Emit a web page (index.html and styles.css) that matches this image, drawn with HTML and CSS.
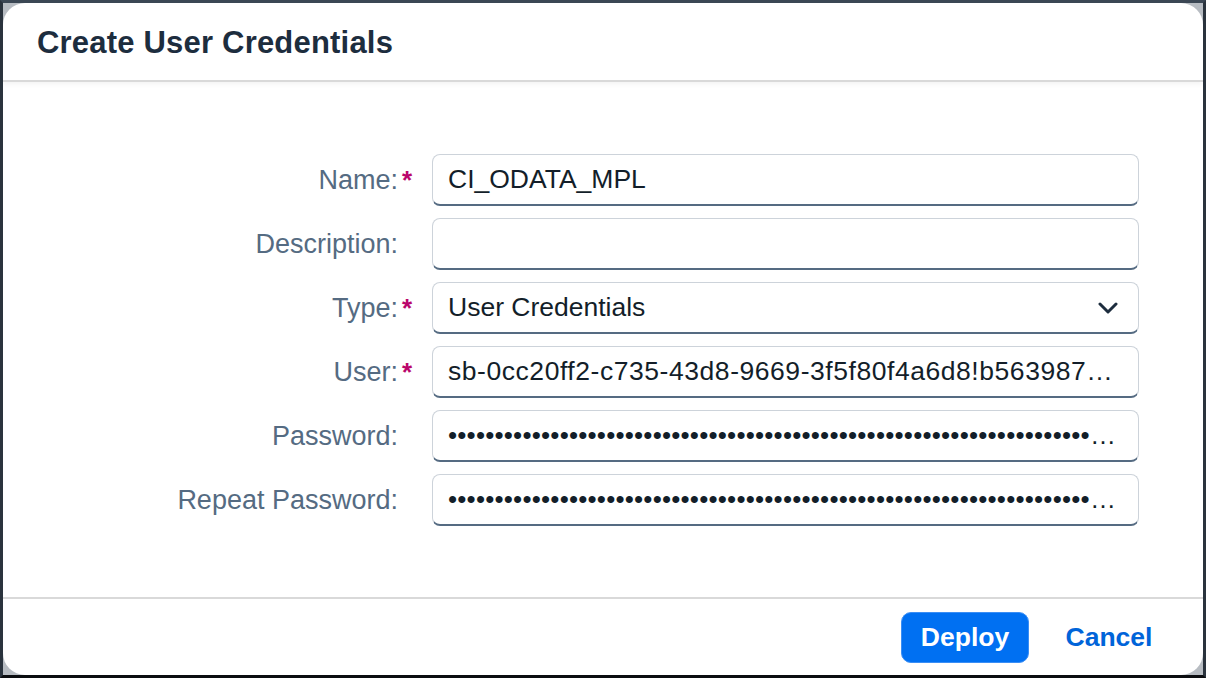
FILE: index.html
```html
<!DOCTYPE html>
<html lang="en">
<head>
<meta charset="utf-8">
<title>Create User Credentials</title>
<link rel="stylesheet" href="styles.css">
</head>
<body>
<div class="frame">
  <div class="dialog">
    <header class="dialog-header">
      <h1 class="dialog-title">Create User Credentials</h1>
    </header>
    <main class="dialog-content">
      <div class="form">
        <label class="label">Name:</label><span class="req">*</span>
        <div class="field"><span class="value">CI_ODATA_MPL</span></div>

        <label class="label">Description:</label><span class="req"></span>
        <div class="field"><span class="value"></span></div>

        <label class="label">Type:</label><span class="req">*</span>
        <div class="field field-select"><span class="value">User Credentials</span>
          <svg class="chevron" width="20" height="12" viewBox="0 0 20 12"><path d="M2 2 L10 10 L18 2" fill="none" stroke="#1d2d3e" stroke-width="3" stroke-linecap="round" stroke-linejoin="round"/></svg>
        </div>

        <label class="label">User:</label><span class="req">*</span>
        <div class="field"><span class="value value-id">sb-0cc20ff2-c735-43d8-9669-3f5f80f4a6d8!b563987|it!b117912</span></div>

        <label class="label">Password:</label><span class="req"></span>
        <div class="field"><span class="value dots">••••••••••••••••••••••••••••••••••••••••••••••••••••••••••••••••••••••••••••••••••••••••••••••••••••••••••••••••••••••••</span></div>

        <label class="label">Repeat Password:</label><span class="req"></span>
        <div class="field"><span class="value dots">••••••••••••••••••••••••••••••••••••••••••••••••••••••••••••••••••••••••••••••••••••••••••••••••••••••••••••••••••••••••</span></div>
      </div>
    </main>
    <footer class="dialog-footer">
      <button class="btn btn-primary">Deploy</button>
      <button class="btn btn-link">Cancel</button>
    </footer>
  </div>
</div>
</body>
</html>
```

FILE: styles.css
```css
* { box-sizing: border-box; }
html, body { margin: 0; padding: 0; }
body {
  width: 1206px;
  height: 678px;
  overflow: hidden;
  font-family: "Liberation Sans", Arial, sans-serif;
  background: #b7bcc2;
}
.frame {
  width: 1206px;
  height: 678px;
  border-top: 3px solid #3b4754;
  border-left: 3px solid #2a333d;
  border-right: 3px solid #2a333d;
  border-bottom: 3px solid #0b0d10;
  background: #b7bcc2;
}
.dialog {
  width: 100%;
  height: 100%;
  background: #ffffff;
  border-radius: 22px;
  display: flex;
  flex-direction: column;
  overflow: hidden;
}
.dialog-header {
  height: 79px;
  flex: none;
  border-bottom: 2px solid #d9d9d9;
  box-shadow: 0 2px 5px rgba(0, 0, 0, 0.05);
  display: flex;
  align-items: center;
  padding-left: 34px;
  padding-top: 3px;
}
.dialog-title {
  margin: 0;
  font-size: 31px;
  font-weight: 700;
  color: #1d2d3e;
  letter-spacing: 0.2px;
}
.dialog-content {
  flex: 1;
  padding-top: 72px;
}
.form {
  display: grid;
  grid-template-columns: 395px 34px 707px;
  grid-auto-rows: 52px;
  row-gap: 12px;
  align-items: center;
}
.label {
  text-align: right;
  font-size: 27px;
  color: #556b82;
  white-space: nowrap;
}
.req {
  align-self: center;
  padding-left: 4px;
  color: #ba066c;
  font-size: 26px;
  font-weight: 700;
}
.field {
  height: 52px;
  border: 1.5px solid #cdd3da;
  border-bottom: 2px solid #556b82;
  border-radius: 8px;
  background: #fff;
  display: flex;
  align-items: center;
  padding: 0 16px 0 15px;
  min-width: 0;
}
.value {
  flex: 1;
  min-width: 0;
  font-size: 26.5px;
  color: #131e29;
  white-space: nowrap;
  overflow: hidden;
  text-overflow: ellipsis;
}
.value-id {
  letter-spacing: 0.55px;
  margin-right: 6px;
}
.dots {
  font-size: 26px;
  letter-spacing: 0.2px;
}
.chevron {
  flex: none;
  margin-left: 8px;
  margin-right: 4px;
}
.dialog-footer {
  height: 78px;
  flex: none;
  border-top: 2px solid #d9d9d9;
  display: flex;
  align-items: center;
  justify-content: flex-end;
  padding-right: 30px;
  gap: 16px;
}
.btn {
  width: 128px;
  height: 51px;
  border-radius: 10px;
  font-family: "Liberation Sans", Arial, sans-serif;
  font-size: 26.5px;
  font-weight: 700;
  cursor: pointer;
}
.btn-primary {
  background: #0070f2;
  border: 1px solid #3a8ef5;
  color: #ffffff;
}
.btn-link {
  background: transparent;
  border: 1px solid transparent;
  color: #0064d9;
}
```
